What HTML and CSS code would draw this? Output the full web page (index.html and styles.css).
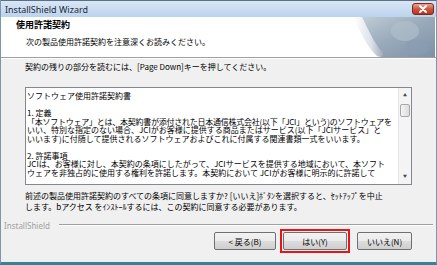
FILE: index.html
```html
<!DOCTYPE html>
<html lang="ja">
<head>
  <meta charset="UTF-8">
  <title>InstallShield Wizard</title>
  <link rel="stylesheet" href="styles.css">
</head>
<body>
  <div class="window">
    <div class="titlebar">
      <span class="title">InstallShield Wizard</span>
      <span class="close">
        <svg width="22" height="12" viewBox="0 0 22 12"><path d="M8 3 L14 9 M14 3 L8 9" stroke="#fff" stroke-width="2" stroke-linecap="round"/></svg>
      </span>
    </div>
    <div class="header">
      <div class="header-text">
        <div class="header-title">使用許諾契約</div>
        <div class="header-sub">次の製品使用許諾契約を注意深くお読みください。</div>
      </div>
      <svg class="curl" width="82" height="40" viewBox="0 0 82 40">
        <defs>
          <linearGradient id="bg" x1="0" y1="0" x2="1" y2="1">
            <stop offset="0" stop-color="#c3ced8"/>
            <stop offset="0.5" stop-color="#98a9ba"/>
            <stop offset="1" stop-color="#7d92a6"/>
          </linearGradient>
          <linearGradient id="roll" x1="0" y1="0" x2="1" y2="0">
            <stop offset="0" stop-color="#ffffff"/>
            <stop offset="0.6" stop-color="#dde3e9"/>
            <stop offset="1" stop-color="#9eacba"/>
          </linearGradient>
        </defs>
        <path d="M6 0 C14 12 20 28 28 40 L82 40 L82 0 Z" fill="url(#bg)"/>
        <ellipse cx="52" cy="14" rx="14" ry="10" fill="#b4c1cd" opacity="0.6"/>
        <ellipse cx="64" cy="30" rx="12" ry="8" fill="#8a9db0" opacity="0.6"/>
        <path d="M0 0 L9 0 C15 12 21 26 30 36 C31 39 27 41 24 39 C14 30 8 16 0 0 Z" fill="url(#roll)"/>
      </svg>
    </div>
    <div class="content">
      <p class="hint">契約の残りの部分を読むには、[Page Down]キーを押してください。</p>
      <div class="license">
        <div class="license-text">
          <div>ソフトウェア使用許諾契約書</div>
          <div>&nbsp;</div>
          <div>1. 定義</div>
          <div class="tight">「本ソフトウェア」とは、本契約書が添付された日本通信株式会社(以下「JCI」という)のソフトウェアを</div>
          <div>いい、特別な指定のない場合、JCIがお客様に提供する商品またはサービス(以下「JCIサービス」と</div>
          <div>いいます)に付随して提供されるソフトウェアおよびこれに付属する関連書類一式をいいます。</div>
          <div>&nbsp;</div>
          <div>2. 許諾事項</div>
          <div>JCIは、お客様に対し、本契約の条項にしたがって、JCIサービスを提供する地域において、本ソフト</div>
          <div>ウェアを非独占的に使用する権利を許諾します。本契約において JCIがお客様に明示的に許諾して</div>
        </div>
        <div class="scrollbar">
          <div class="arrow">▲</div>
          <div class="thumb"></div>
          <div class="track"></div>
          <div class="arrow">▼</div>
        </div>
      </div>
      <p class="question">前述の製品使用許諾契約のすべての条項に同意しますか? [いいえ]ﾎﾞﾀﾝを選択すると、ｾｯﾄｱｯﾌﾟを中止<br>します。bアクセス をｲﾝｽﾄｰﾙするには、この契約に同意する必要があります。</p>
    </div>
    <div class="footer">
      <span class="brand">InstallShield</span>
      <span class="rule"></span>
    </div>
    <div class="buttons">
      <button class="btn btn-back">&lt; 戻る(B)</button>
      <span class="highlight"><button class="btn btn-yes">はい(Y)</button></span>
      <button class="btn btn-no">いいえ(N)</button>
    </div>
  </div>
</body>
</html>
```

FILE: styles.css
```css
* {
  margin: 0;
  padding: 0;
  box-sizing: border-box;
  font-family: 'Noto Sans CJK JP', 'Noto Sans', sans-serif;
}
body {
  width: 437px;
  height: 265px;
  overflow: hidden;
}
.window {
  width: 437px;
  height: 265px;
  background: #f0f0f0;
  border-left: 1px solid #7d96b0;
  border-right: 1px solid #7d96b0;
  border-bottom: 3px solid #3d8096;
}
.titlebar {
  height: 17px;
  display: flex;
  align-items: center;
  padding-left: 4px;
  background: linear-gradient(#d9e6f4, #bcd3ec);
  border-top: 1px solid #5a6f88;
}
.title {
  font-family: 'Noto Sans', sans-serif;
  font-size: 9px;
  color: #1c2a3a;
}
.close {
  margin-left: auto;
  margin-right: 2px;
  width: 22px;
  height: 12px;
  display: flex;
  border: 1px solid #7a2a20;
  border-radius: 3px;
  background: linear-gradient(#eba797, #d0553d 50%, #b83520);
}
.close svg {
  margin: -1px;
}
.header {
  height: 41px;
  display: flex;
  justify-content: space-between;
  background: #fff;
  border-bottom: 1px solid #a0a0a0;
  box-shadow: 0 1px 0 #fff;
}
.header-text {
  padding: 1px 0 0 15px;
}
.header-title {
  font-size: 9px;
  font-weight: bold;
  line-height: 14px;
}
.header-sub {
  font-size: 8px;
  line-height: 12px;
  margin: 4px 0 0 10px;
}
.curl {
  margin-right: 1px;
}
.content {
  padding-left: 24px;
}
.hint {
  font-size: 8px;
  line-height: 10px;
  margin-top: 4px;
}
.license {
  width: 387px;
  height: 98px;
  margin-top: 15px;
  display: flex;
  background: #fff;
  border: 1px solid #828790;
}
.license-text {
  flex: 1;
  overflow: hidden;
  padding: 4px 0 0 1px;
  font-size: 8px;
  line-height: 8.5px;
  white-space: nowrap;
}
.tight {
  letter-spacing: -0.25px;
}
.scrollbar {
  width: 13px;
  display: flex;
  flex-direction: column;
  background: #f4f4f4;
  border-left: 1px solid #e6e6e6;
}
.arrow {
  height: 15px;
  font-size: 4px;
  line-height: 15px;
  text-align: center;
  color: #444;
}
.thumb {
  height: 13px;
  margin: 1px 1px 0;
  border: 1px solid #a8a8a8;
  border-radius: 2px;
  background: linear-gradient(90deg, #f4f4f4, #dcdcdc);
}
.track {
  flex: 1;
}
.question {
  font-size: 8px;
  line-height: 11px;
  margin-top: 5px;
}
.footer {
  display: flex;
  align-items: center;
  margin-top: 9px;
  padding: 0 3px;
  height: 8px;
}
.brand {
  font-family: 'Noto Sans', sans-serif;
  font-size: 8px;
  color: #a0a0a0;
}
.rule {
  flex: 1;
  margin-left: 9px;
  border-top: 1px solid #a0a0a0;
  border-bottom: 1px solid #fff;
}
.buttons {
  display: flex;
  justify-content: flex-end;
  align-items: center;
  padding-right: 24px;
}
.btn {
  height: 18px;
  font-size: 8px;
  color: #000;
  border: 1px solid #707070;
  border-radius: 2px;
  background: linear-gradient(#f2f2f2, #ebebeb 50%, #dddddd 51%, #cfcfcf);
}
.btn-back {
  width: 62px;
}
.highlight {
  margin: 0 7px 0 4px;
  padding: 1px;
  border: 2px solid #e8141c;
  display: flex;
}
.btn-yes {
  width: 64px;
}
.btn-no {
  width: 55px;
}
```
